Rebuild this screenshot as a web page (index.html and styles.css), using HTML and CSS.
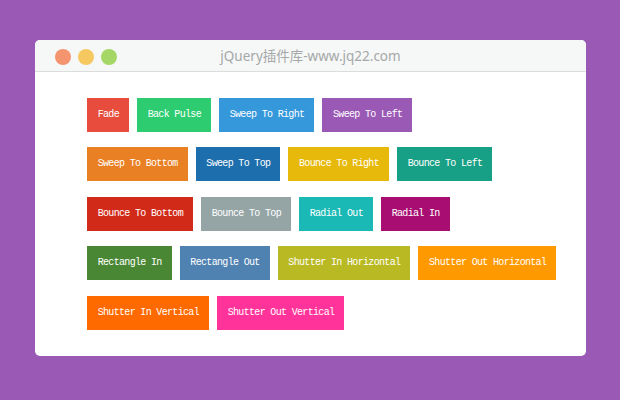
FILE: index.html
```html
<!DOCTYPE html>
<html>
<head>
<meta charset="utf-8">
<link rel="stylesheet" href="styles.css">
</head>
<body>
<div class="window">
  <div class="titlebar">
    <div class="dots">
      <span class="dot red"></span>
      <span class="dot yellow"></span>
      <span class="dot green"></span>
    </div>
    <div class="title">jQuery插件库-www.jq22.com</div>
  </div>
  <div class="content">
    <div class="row">
      <span class="btn c-fade">Fade</span>
      <span class="btn c-pulse">Back Pulse</span>
      <span class="btn c-sright">Sweep To Right</span>
      <span class="btn c-sleft">Sweep To Left</span>
    </div>
    <div class="row">
      <span class="btn c-sbottom">Sweep To Bottom</span>
      <span class="btn c-stop">Sweep To Top</span>
      <span class="btn c-bright">Bounce To Right</span>
      <span class="btn c-bleft">Bounce To Left</span>
    </div>
    <div class="row">
      <span class="btn c-bbottom">Bounce To Bottom</span>
      <span class="btn c-btop">Bounce To Top</span>
      <span class="btn c-rout">Radial Out</span>
      <span class="btn c-rin">Radial In</span>
    </div>
    <div class="row">
      <span class="btn c-recin">Rectangle In</span>
      <span class="btn c-recout">Rectangle Out</span>
      <span class="btn c-shinh">Shutter In Horizontal</span>
      <span class="btn c-shouth">Shutter Out Horizontal</span>
    </div>
    <div class="row">
      <span class="btn c-shinv">Shutter In Vertical</span>
      <span class="btn c-shoutv">Shutter Out Vertical</span>
    </div>
  </div>
</div>
</body>
</html>
```
FILE: styles.css
```css
html, body {
  margin: 0;
  padding: 0;
}
body {
  background: #9b59b6;
  width: 620px;
  height: 400px;
  padding-top: 40px;
  padding-left: 35px;
  box-sizing: border-box;
}
.window {
  width: 551px;
  height: 316px;
  background: #fff;
  border-radius: 5px;
  overflow: hidden;
}
.titlebar {
  position: relative;
  height: 31px;
  background: #f6f7f7;
  border-bottom: 1px solid #dcdcdc;
  display: flex;
  align-items: center;
}
.dots {
  display: flex;
  gap: 7px;
  padding-left: 20px;
  padding-top: 2px;
}
.dot {
  width: 16px;
  height: 16px;
  border-radius: 50%;
  display: block;
}
.red { background: #f4956f; }
.yellow { background: #f6c860; }
.green { background: #a4d765; }
.title {
  position: absolute;
  left: 0;
  right: 0;
  top: 0;
  height: 33px;
  line-height: 33px;
  text-align: center;
  font-family: "Noto Sans", "Noto Sans CJK SC", sans-serif;
  font-size: 13.5px;
  color: #a5a8a8;
}
.content {
  padding: 25.5px 0 0 52px;
  display: flex;
  flex-direction: column;
  gap: 15.5px;
}
.row {
  display: flex;
  gap: 8px;
}
.btn {
  display: block;
  height: 34px;
  line-height: 34px;
  padding: 0 10px 0 10.7px;
  font-family: "Liberation Mono", "DejaVu Sans Mono", monospace;
  font-size: 10px;
  letter-spacing: -0.67px;
  color: #fff;
  white-space: nowrap;
}
.c-fade { background: #e74c3c; }
.c-pulse { background: #2ecc71; }
.c-sright { background: #3498db; }
.c-sleft { background: #9b59b6; }
.c-sbottom { background: #e98024; }
.c-stop { background: #1c6ead; }
.c-bright { background: #e6b90b; }
.c-bleft { background: #17a085; }
.c-bbottom { background: #d22a19; }
.c-btop { background: #95a5a6; }
.c-rout { background: #1bb9b6; }
.c-rin { background: #a80e72; }
.c-recin { background: #4a8735; }
.c-recout { background: #4f82b1; }
.c-shinh { background: #b9b924; }
.c-shouth { background: #ff9900; }
.c-shinv { background: #ff6a00; }
.c-shoutv { background: #ff3399; }
```
